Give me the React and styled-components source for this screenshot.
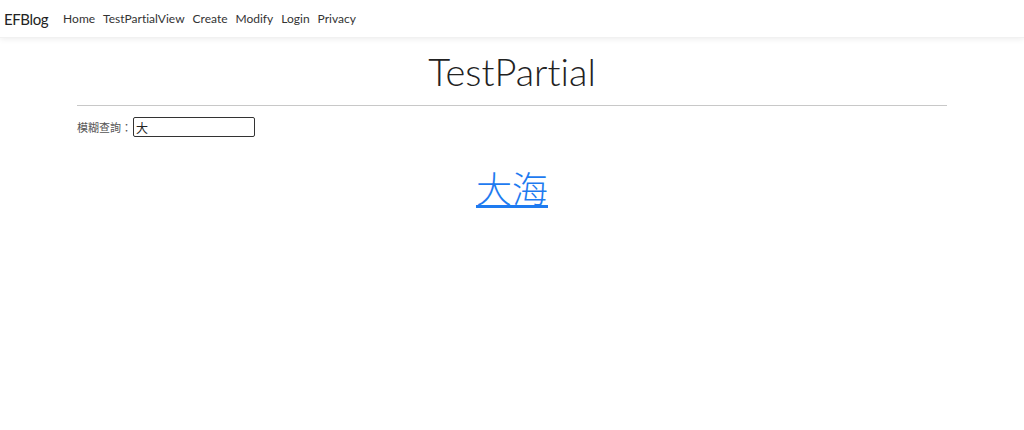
import React from "react";
import styled, { createGlobalStyle } from "styled-components";

const GlobalStyle = createGlobalStyle`
  body {
    margin: 0;
    background: #fff;
    font-family: Lato, "Noto Sans CJK TC", sans-serif;
    font-variant-ligatures: none;
    color: #212529;
  }
`;

const NavBar = styled.nav`
  height: 38px;
  display: flex;
  align-items: center;
  padding: 0 4px;
  background: #fff;
  box-shadow: 0 1px 6px rgba(0, 0, 0, 0.08);
  border-bottom: 1px solid #f1f1f1;
  box-sizing: border-box;
`;

const Brand = styled.a`
  font-size: 15px;
  letter-spacing: -0.4px;
  color: #222;
  margin-right: 15px;
  text-decoration: none;
`;

const NavLink = styled.a`
  font-size: 12px;
  color: #333;
  margin-right: 8px;
  text-decoration: none;
`;

const Container = styled.main`
  width: 870px;
  margin: 0 auto;
`;

const Title = styled.h1`
  margin: 8px 0 0;
  height: 59px;
  text-align: center;
  font-family: Lato, sans-serif;
  font-weight: 300;
  font-size: 38px;
  line-height: 50px;
  color: #222;
`;

const Rule = styled.hr`
  margin: 0;
  border: 0;
  border-top: 1px solid #c8c8c8;
`;

const SearchRow = styled.div`
  display: flex;
  align-items: center;
  margin-top: 11px;
`;

const Label = styled.label`
  font-size: 11px;
  color: #555;
  font-family: "Noto Sans CJK TC", sans-serif;
`;

const Input = styled.input`
  width: 122px;
  height: 20px;
  box-sizing: border-box;
  border: 1px solid #333;
  border-radius: 2px;
  padding: 0 2px;
  font-size: 12px;
  font-family: "Noto Sans CJK TC", sans-serif;
  color: #222;
  outline: none;
  margin-left: 1px;
`;

const Result = styled.div`
  text-align: center;
  margin-top: 24px;
`;

const ResultLink = styled.a`
  font-size: 36px;
  font-family: "Noto Sans CJK TC", sans-serif;
  font-weight: 300;
  color: #1e7bf0;
  text-decoration: underline;
  text-decoration-thickness: 3px;
  text-underline-offset: 2px;
`;

const links = ["Home", "TestPartialView", "Create", "Modify", "Login", "Privacy"];

export default function App() {
  return (
    <>
      <GlobalStyle />
      <NavBar>
        <Brand href="#">EFBlog</Brand>
        {links.map((l) => (
          <NavLink key={l} href="#">{l}</NavLink>
        ))}
      </NavBar>
      <Container>
        <Title>TestPartial</Title>
        <Rule />
        <SearchRow>
          <Label>模糊查詢：</Label>
          <Input defaultValue="大" />
        </SearchRow>
        <Result>
          <ResultLink href="#">大海</ResultLink>
        </Result>
      </Container>
    </>
  );
}
